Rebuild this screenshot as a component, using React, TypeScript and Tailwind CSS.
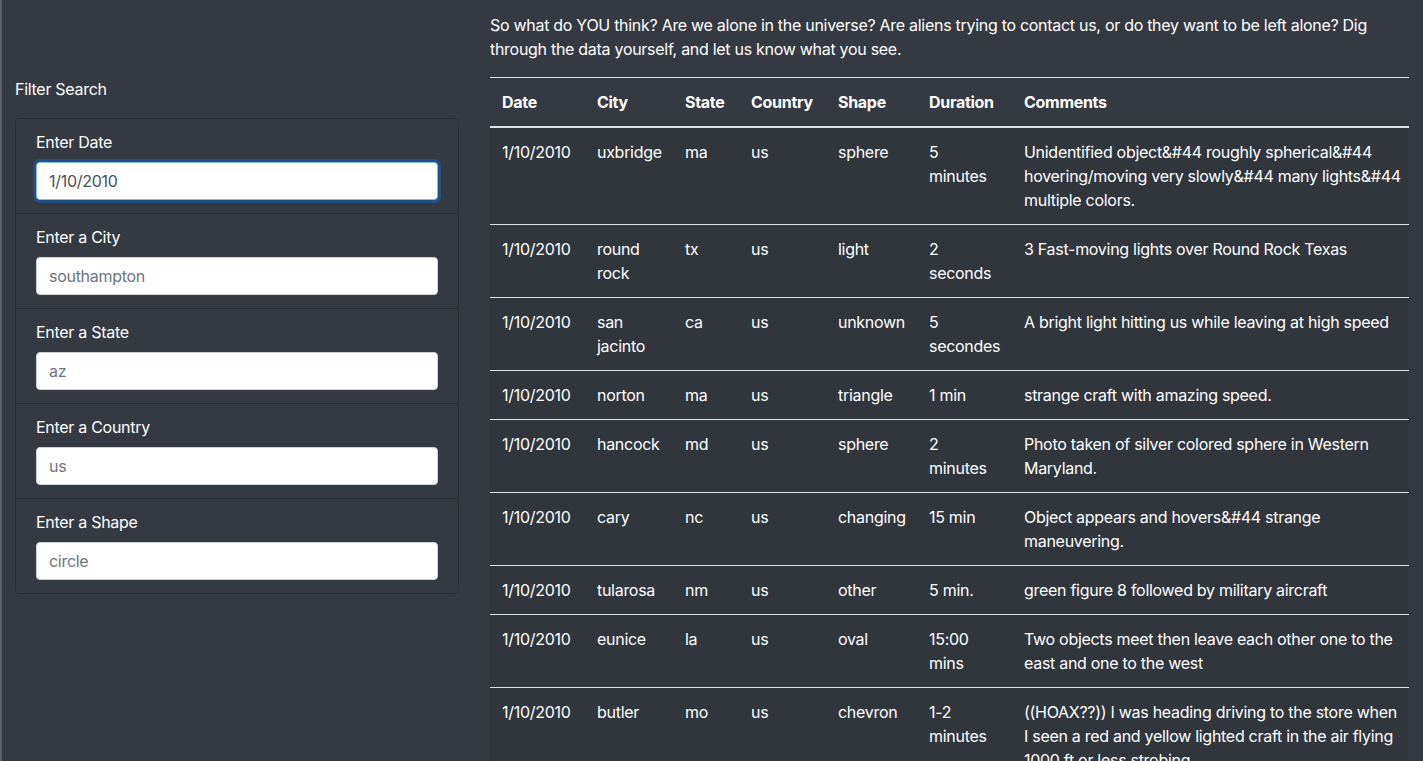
const filters = [
  { label: "Enter Date", placeholder: "1/10/2010", value: "1/10/2010", focused: true },
  { label: "Enter a City", placeholder: "southampton" },
  { label: "Enter a State", placeholder: "az" },
  { label: "Enter a Country", placeholder: "us" },
  { label: "Enter a Shape", placeholder: "circle" },
];

// comments given as string[] are drawn one line each, as the source page wraps them
const rows: (string | string[])[][] = [
  ["1/10/2010", "uxbridge", "ma", "us", "sphere", "5 minutes", ["Unidentified object&#44 roughly spherical&#44", "hovering/moving very slowly&#44 many lights&#44", "multiple colors."]],
  ["1/10/2010", "round rock", "tx", "us", "light", "2 seconds", "3 Fast-moving lights over Round Rock Texas"],
  ["1/10/2010", "san jacinto", "ca", "us", "unknown", "5 secondes", "A bright light hitting us while leaving at high speed"],
  ["1/10/2010", "norton", "ma", "us", "triangle", "1 min", "strange craft with amazing speed."],
  ["1/10/2010", "hancock", "md", "us", "sphere", "2 minutes", "Photo taken of silver colored sphere in Western Maryland."],
  ["1/10/2010", "cary", "nc", "us", "changing", "15 min", "Object appears and hovers&#44 strange maneuvering."],
  ["1/10/2010", "tularosa", "nm", "us", "other", "5 min.", "green figure 8 followed by military aircraft"],
  ["1/10/2010", "eunice", "la", "us", "oval", "15:00 mins", "Two objects meet then leave each other one to the east and one to the west"],
  ["1/10/2010", "butler", "mo", "us", "chevron", "1-2 minutes", "((HOAX??)) I was heading driving to the store when I seen a red and yellow lighted craft in the air flying 1000 ft or less strobing."],
];

const headers = ["Date", "City", "State", "Country", "Shape", "Duration", "Comments"];
const widths = ["w-[95px]", "w-[88px]", "w-[66px]", "w-[87px]", "w-[91px]", "w-[95px]", "w-[397px]"];

export default function App() {
  return (
    <main
      className="min-h-screen bg-[#353a42] text-white border-l-2 border-[#5b6068] text-[16px] leading-6 tracking-[-0.018em]"
      style={{ fontFamily: "Inter, 'Noto Sans', sans-serif" }}
    >
      <div className="flex">
        {/* Filters */}
        <aside className="w-[472px] shrink-0 pl-[13px] pr-[15px] pt-[77px]">
          <div className="mb-[17px]">Filter Search</div>
          <div className="rounded border border-[#2a2e34]">
            {filters.map((f, i) => (
              <div
                key={f.label}
                className={`px-5 pt-3 pb-3 ${i > 0 ? "border-t border-[#2a2e34]" : ""}`}
              >
                <label className="block mb-2 leading-[23px]">{f.label}</label>
                <input
                  type="text"
                  placeholder={f.placeholder}
                  defaultValue={f.value}
                  className={
                    f.focused
                      ? "block w-full h-[38px] px-3 mb-px rounded bg-white text-[#495057] border border-[#80bdff] shadow-[0_0_0_3px_rgba(0,123,255,0.35)] outline-none"
                      : "block w-full h-[38px] px-3 mb-px rounded bg-white text-[#495057] placeholder:text-[#6c757d] border border-[#ced4da] outline-none"
                  }
                />
              </div>
            ))}
          </div>
        </aside>

        {/* Results */}
        <section className="w-[935px] shrink-0 pl-[16px] pt-[13px]">
          <p className="mb-4">
            So what do YOU think? Are we alone in the universe? Are aliens trying to contact us, or do they want to be
            left alone? Dig through the data yourself, and let us know what you see.
          </p>
          <table className="w-[919px] table-fixed border-collapse">
            <colgroup>
              {widths.map((w, i) => (
                <col key={i} className={w} />
              ))}
            </colgroup>
            <thead>
              <tr>
                {headers.map((h) => (
                  <th
                    key={h}
                    className="text-left font-bold p-3 align-bottom border-t border-[#dee2e6] border-b-2 border-b-[#dee2e6]"
                  >
                    {h}
                  </th>
                ))}
              </tr>
            </thead>
            <tbody className="bg-[#31363d]">
              {rows.map((r, i) => (
                <tr key={i} className="border-t border-[#dee2e6]">
                  {r.map((c, j) => (
                    <td key={j} className="p-3 align-top">
                      {Array.isArray(c)
                        ? c.map((line) => (
                            <span key={line} className="block whitespace-nowrap">
                              {line}
                            </span>
                          ))
                        : c}
                    </td>
                  ))}
                </tr>
              ))}
            </tbody>
          </table>
        </section>
      </div>
    </main>
  );
}
